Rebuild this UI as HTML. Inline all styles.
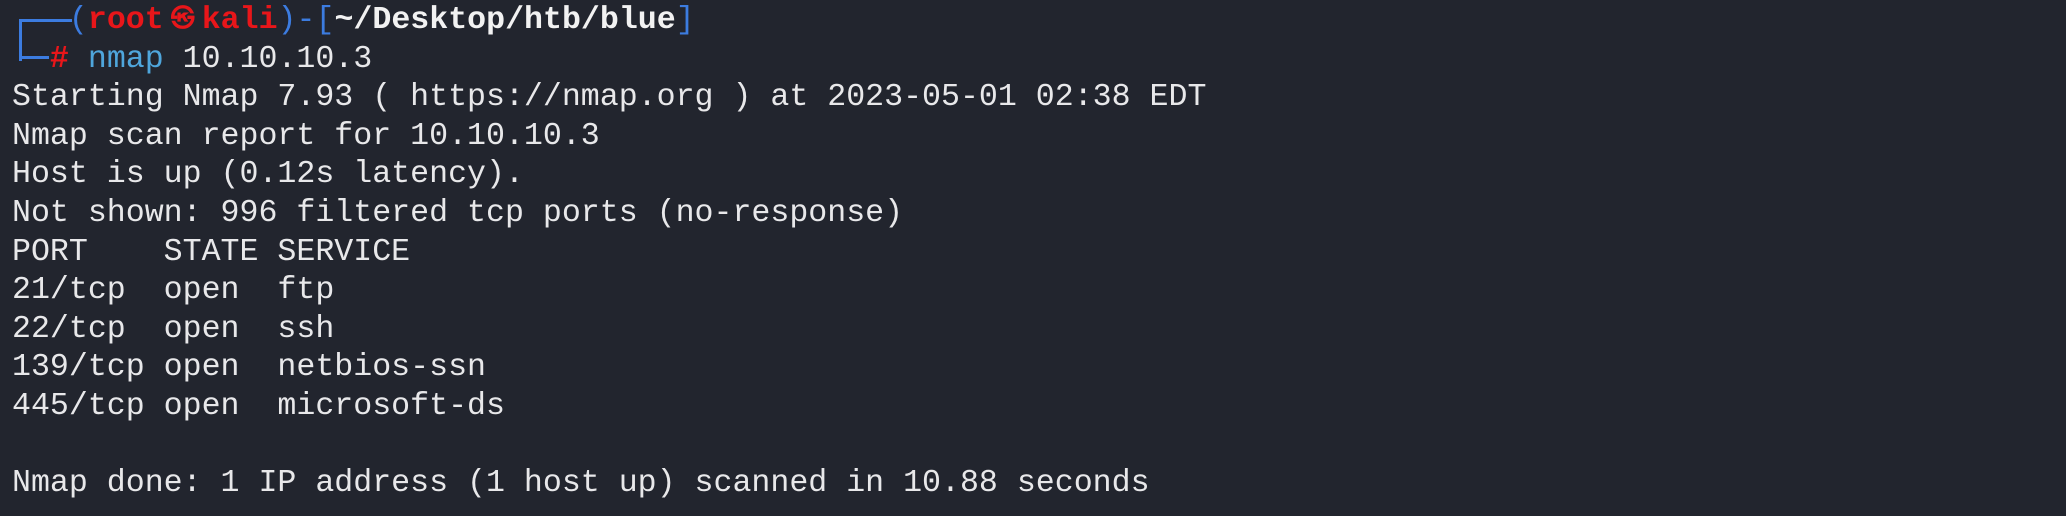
<!DOCTYPE html>
<html><head><meta charset="utf-8"><style>
html,body{margin:0;padding:0}
body{width:2066px;height:516px;background:#22252e;overflow:hidden;font-family:"Liberation Mono","DejaVu Sans Mono",monospace;font-size:31.6px;color:#e8e8ea;}
.t{position:absolute;left:12px;top:2px;line-height:38.6px;white-space:pre;}
.r{color:#e8161a;font-weight:bold}
.b{color:#3c7ce0}
.c{color:#4fa6dc}
.w{color:#f2f2f2;font-weight:bold}
.k{display:inline-block;width:38px;text-align:center;font-size:24px;vertical-align:2px}
.box1{position:absolute;left:19px;top:19px;width:50px;height:39px;border-left:3px solid #3c7ce0;border-top:3px solid #3c7ce0}
.box2{position:absolute;left:19px;top:56px;width:30px;border-top:3px solid #3c7ce0}
</style></head><body>
<div class="box1"></div><div class="box2"></div>
<div class="t"><span>   </span><span class="b">(</span><span class="r">root<span class="k">㉿</span>kali</span><span class="b">)-[</span><span class="w">~/Desktop/htb/blue</span><span class="b">]</span>
<span>  </span><span class="r">#</span> <span class="c">nmap</span> 10.10.10.3
Starting Nmap 7.93 ( https://nmap.org ) at 2023-05-01 02:38 EDT
Nmap scan report for 10.10.10.3
Host is up (0.12s latency).
Not shown: 996 filtered tcp ports (no-response)
PORT    STATE SERVICE
21/tcp  open  ftp
22/tcp  open  ssh
139/tcp open  netbios-ssn
445/tcp open  microsoft-ds

Nmap done: 1 IP address (1 host up) scanned in 10.88 seconds</div>
</body></html>
